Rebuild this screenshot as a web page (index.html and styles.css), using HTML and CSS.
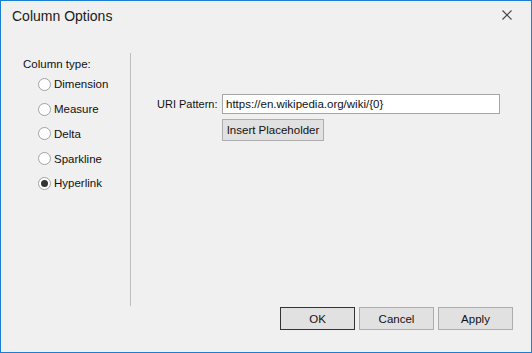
FILE: index.html
```html
<!DOCTYPE html>
<html lang="en">
<head>
    <meta charset="UTF-8">
    <title>Column Options</title>
    <link rel="stylesheet" href="styles.css">
</head>
<body>
    <div class="window">
        <div class="titlebar">
            <span class="title">Column Options</span>
            <svg class="close" width="10" height="10" viewBox="0 0 10 10">
                <path d="M0.5 0.5 L9.5 9.5 M9.5 0.5 L0.5 9.5" stroke="#444" stroke-width="1.1" fill="none"/>
            </svg>
        </div>

        <div class="content">
            <div class="types">
                <div class="group-label">Column type:</div>
                <label class="radio"><span class="dot"></span>Dimension</label>
                <label class="radio"><span class="dot"></span>Measure</label>
                <label class="radio"><span class="dot"></span>Delta</label>
                <label class="radio"><span class="dot"></span>Sparkline</label>
                <label class="radio checked"><span class="dot"></span>Hyperlink</label>
            </div>

            <div class="options">
                <div class="field">
                    <span class="field-label">URI Pattern:</span>
                    <div class="textbox">https://en.wikipedia.org/wiki/{0}</div>
                    <span></span>
                    <div><button class="btn placeholder">Insert Placeholder</button></div>
                </div>
            </div>
        </div>

        <div class="footer">
            <button class="btn default">OK</button>
            <button class="btn">Cancel</button>
            <button class="btn">Apply</button>
        </div>
    </div>
</body>
</html>
```

FILE: styles.css
```css
body {
    margin: 0;
    padding: 0;
    font-family: "Liberation Sans", Arial, sans-serif;
    font-size: 11.5px;
    color: #111;
}
.window {
    width: 532px;
    height: 353px;
    box-sizing: border-box;
    border: 1px solid #1a7fd4;
    background-color: #f0f0f0;
    display: flex;
    flex-direction: column;
    white-space: nowrap;
}
.titlebar {
    height: 52px;
    display: flex;
    justify-content: space-between;
    align-items: flex-start;
    padding: 5px 19px 0 11px;
    box-sizing: border-box;
}
.title {
    font-size: 14px;
    line-height: 20px;
    color: #1a1a1a;
}
.close {
    margin-top: 4px;
}
.content {
    height: 253px;
    display: flex;
}
.types {
    width: 130px;
    box-sizing: border-box;
    border-right: 1px solid #bcbcbc;
    padding: 3px 0 0 22px;
}
.group-label {
    line-height: 16px;
}
.radio {
    display: flex;
    align-items: center;
    height: 24.75px;
    padding-left: 15px;
    gap: 3px;
}
.dot {
    width: 13px;
    height: 13px;
    box-sizing: border-box;
    border: 1px solid #a2a2a2;
    border-radius: 50%;
    background-color: #fff;
    display: flex;
    align-items: center;
    justify-content: center;
}
.checked .dot::after {
    content: "";
    width: 7px;
    height: 7px;
    border-radius: 50%;
    background-color: #333;
}
.options {
    flex: 1;
    padding: 41px 0 0 26px;
}
.field {
    display: grid;
    grid-template-columns: 65px 278px;
    row-gap: 5px;
}
.field-label {
    font-size: 11px;
    line-height: 20px;
}
.textbox {
    height: 20px;
    box-sizing: border-box;
    border: 1px solid #a5a5a5;
    background-color: #fff;
    padding: 0 3px;
    line-height: 18px;
}
.btn {
    font-family: inherit;
    font-size: 11.5px;
    color: #111;
    background-color: #e1e1e1;
    border: 1px solid #adadad;
    padding: 0;
    height: 23px;
    width: 75px;
}
.placeholder {
    width: 102px;
    height: 22px;
}
.default {
    border-color: #333;
}
.footer {
    flex: 1;
    display: flex;
    justify-content: flex-end;
    gap: 4px;
    padding: 1px 18px 0 0;
}
```
